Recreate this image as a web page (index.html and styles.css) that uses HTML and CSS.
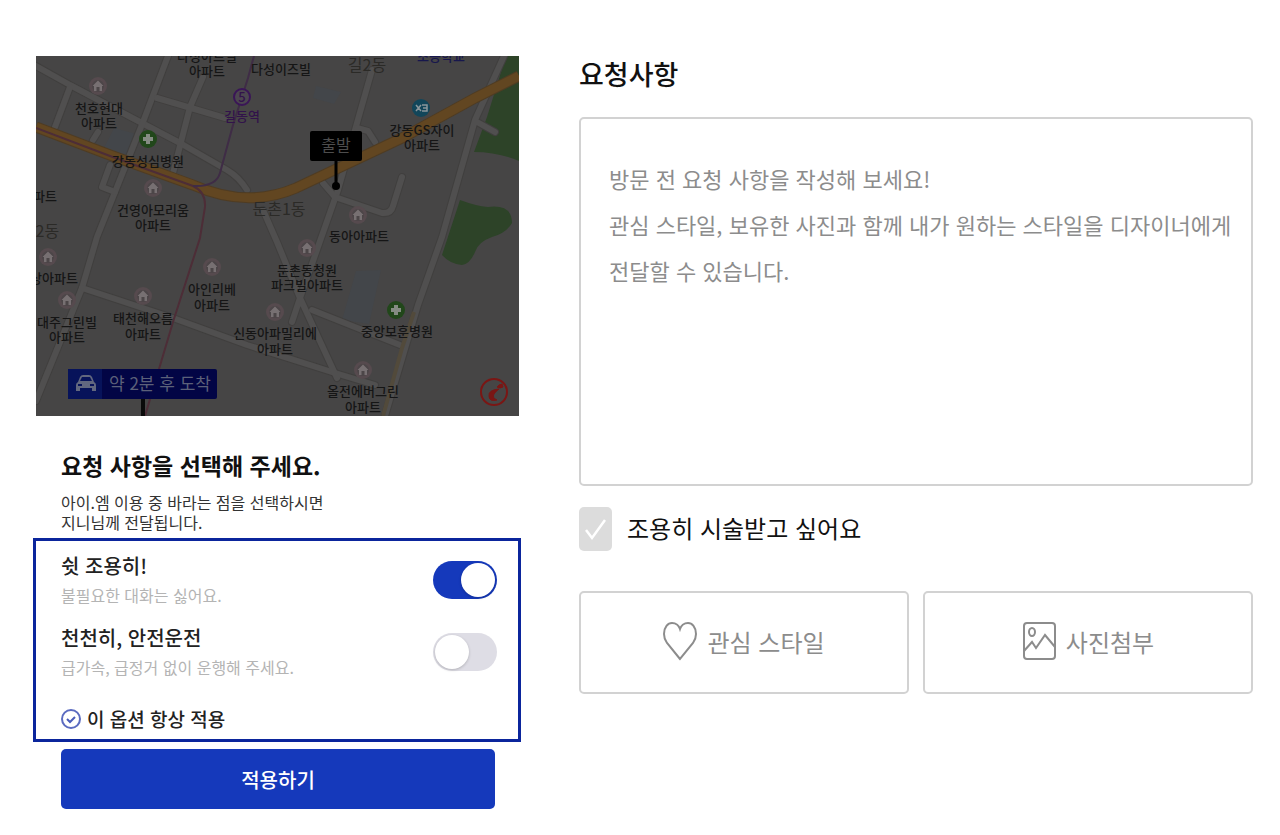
FILE: index.html
```html
<!DOCTYPE html>
<html lang="ko">
<head>
  <meta charset="UTF-8" />
  <meta name="viewport" content="width=device-width, initial-scale=1" />
  <title>요청사항</title>
  <link rel="stylesheet" href="styles.css">
</head>
<body>

<main class="page">

  <section class="ride">
    <svg class="map" viewBox="0 0 483 360" role="img" aria-label="지도">
      <defs>
        <g id="home">
          <circle r="9" fill="#564a4e" />
          <circle r="6" fill="#4c4648" />
          <path d="M-5.500 0L0-5.500L5.500 0H4V5H1.500V1H-1.500V5H-4V0Z" fill="#8a8284" opacity=".7" />
        </g>
        <g id="hospital">
          <circle r="9" fill="#21471a" />
          <path d="M-5 0H5M0-5V5" stroke="#858c83" stroke-width="4" />
        </g>
      </defs>

      <rect width="483" height="360" fill="#464545" />
      <path d="M320 215L345 214L333 268L306 264Z" fill="#43464a" />
      <path d="M78 72L100 78L88 104L66 96Z" fill="#43464a" />
      <path d="M280 30L305 36L298 48L277 42Z" fill="#43464a" />

      <!-- parks -->
      <g fill="#2d4328">
        <path d="M470 0H483V105Q462 96 438 96L451 61Z" />
        <path d="M424 144Q440 150 452 151Q476 148 476 167Q470 177 456 181Q442 186 439 196Q434 208 426 209Q414 208 406 199Z" />
      </g>

      <!-- roads -->
      <g class="road-edge">
        <path id="r1" d="M0 10L34 29L104 66L144 87L191 114Q203 121 211 134" />
        <path id="r2" d="M34 31L19 71M62 76L57 84M132 0L107 66L61 181L46 232L0 345" />
        <path id="r3" d="M121 42L189 62M167 21L154 51L137 117M74 109L66 131L79 136" />
        <path id="r4" d="M46 232L137 262L211 289L299 317L339 329" />
        <path id="r5" d="M227 154L241 186L264 242L301 322M256 266L264 242L302 134L336 14" />
        <path id="r6" d="M321 72L332 75L339 86M287 127L299 141L346 157Q355 158 357 150L366 121" />
        <path id="r7" d="M468 0L439 64L406 181L382 249L349 360M441 66L459 76M276 254L364 289" />
      </g>
      <g class="road">
        <use href="#r1" /><use href="#r2" /><use href="#r3" /><use href="#r4" />
        <use href="#r5" /><use href="#r6" /><use href="#r7" />
      </g>
      <path d="M378 256L366 292L347 360" fill="none" stroke="#524a3b" stroke-width="4" />

      <path class="highway-edge" d="M0 71L74 99L157 129Q211 153 260 132L366 82L439 42L483 20" />
      <path class="highway" d="M0 71L74 99L157 129Q211 153 260 132L366 82L439 42L483 20" />

      <!-- subway -->
      <path class="subway-red" d="M0 72L74 100L157 130M157 130Q170 136 169 151L164 182L137 266L109 360" />
      <path class="subway" d="M157 130Q180 131 184 117L197 69L212 22L218 0" />

      <use href="#home" x="62" y="30" />
      <use href="#home" x="117" y="132" />
      <use href="#home" x="322" y="159" />
      <use href="#home" x="271" y="192" />
      <use href="#home" x="176" y="211" />
      <use href="#home" x="107" y="240" />
      <use href="#home" x="31" y="244" />
      <use href="#home" x="12" y="201" />
      <use href="#home" x="239" y="256" />
      <use href="#home" x="327" y="314" />
      <use href="#hospital" x="112" y="83" />
      <use href="#hospital" x="360" y="254" />

      <circle cx="206" cy="41" r="8" fill="#4c464f" stroke="#3a1557" stroke-width="2" />
      <text class="place station" x="206" y="46">5</text>
      <circle cx="385" cy="52" r="9" fill="#12465a" />
      <path d="M380 49L385 55M380 55L385 49M386 49H391V55H386M387 52H391" fill="none" stroke="#8b979c" stroke-width="1.500" />

      <g class="place">
        <text x="171" y="5">다성아트빌</text>
        <text x="171" y="20">아파트</text>
        <text x="245" y="18">다성이즈빌</text>
        <text x="405" y="5" class="school">초등학교</text>
        <text x="63" y="57">천호현대</text>
        <text x="63" y="72">아파트</text>
        <text x="206" y="65" class="station">길동역</text>
        <text x="112" y="110">강동성심병원</text>
        <text x="117" y="159">건영아모리움</text>
        <text x="117" y="174">아파트</text>
        <text x="3" y="145">아파트</text>
        <text x="386" y="79">강동GS자이</text>
        <text x="386" y="94">아파트</text>
        <text x="323" y="185">동아아파트</text>
        <text x="271" y="219">둔촌동청원</text>
        <text x="271" y="234">파크빌아파트</text>
        <text x="176" y="238">아인리베</text>
        <text x="176" y="254">아파트</text>
        <text x="18" y="227">상아파트</text>
        <text x="31" y="271">대주그린빌</text>
        <text x="31" y="286">아파트</text>
        <text x="107" y="267">태천해오름</text>
        <text x="107" y="283">아파트</text>
        <text x="239" y="282">신동아파밀리에</text>
        <text x="239" y="298">아파트</text>
        <text x="361" y="280">중앙보훈병원</text>
        <text x="327" y="340">올전에버그린</text>
        <text x="327" y="356">아파트</text>
      </g>
      <g class="district">
        <text x="331" y="15">길2동</text>
        <text x="243" y="159">둔촌1동</text>
        <text x="4" y="181">촌2동</text>
      </g>

      <!-- departure pin -->
      <path d="M300 104V130" stroke="#000" stroke-width="3" />
      <circle cx="300" cy="130" r="4" />
      <rect x="274" y="75" width="52" height="30" rx="2" />
      <text class="pin-text" x="300" y="95">출발</text>

      <!-- arrival pin -->
      <path d="M107 342V360" stroke="#0a0a0a" stroke-width="4" />
      <rect x="32" y="313" width="149" height="30" rx="2" fill="#020545" />
      <path d="M32 313H66V343H32Z" fill="#07135a" />
      <path d="M42 326L44 321Q45 319 47 319H53Q55 319 56 321L58 326Q60 327 60 329V335H56V332H44V335H40V329Q40 327 42 326ZM44 325H56L54 321H46Z" fill="#62687f" fill-rule="evenodd" />
      <path d="M42 329H46M54 329H58" stroke="#07135a" stroke-width="2" />
      <text class="eta-text" x="124" y="334">약 2분 후 도착</text>

      <circle cx="458" cy="336" r="13" fill="none" stroke="#7a1614" stroke-width="2" />
      <path d="M461 331Q464 333 467 331L466 328L463 329ZM463 333Q452 334 453 340Q453 346 461 344Q456 342 458 338Q460 335 463 333Z" fill="#7a1614" stroke="#7a1614" />
    </svg>

    <div class="sheet-head">
      <h2>요청 사항을 선택해 주세요.</h2>
      <p>아이.엠 이용 중 바라는 점을 선택하시면<br>지니님께 전달됩니다.</p>
    </div>

    <div class="options">
      <div class="option">
        <label for="quiet">
          <strong>쉿 조용히!</strong>
          <span>불필요한 대화는 싫어요.</span>
        </label>
        <input id="quiet" class="switch" type="checkbox" role="switch" checked />
      </div>
      <div class="option">
        <label for="slow">
          <strong>천천히, 안전운전</strong>
          <span>급가속, 급정거 없이 운행해 주세요.</span>
        </label>
        <input id="slow" class="switch" type="checkbox" role="switch" />
      </div>
      <div class="always">
        <span class="tick round">
          <input id="always" type="checkbox" checked />
          <svg viewBox="0 0 20 20" aria-hidden="true"><path d="M6 10L9 13L14 8" /></svg>
        </span>
        <label for="always">이 옵션 항상 적용</label>
      </div>
    </div>

    <button class="apply" type="button">적용하기</button>
  </section>

  <section class="request">
    <h1><label for="memo">요청사항</label></h1>
    <textarea id="memo" placeholder="방문 전 요청 사항을 작성해 보세요!&#10;관심 스타일, 보유한 사진과 함께 내가 원하는 스타일을 디자이너에게 전달할 수 있습니다."></textarea>

    <div class="silent">
      <span class="tick">
        <input id="silent" type="checkbox" checked />
        <svg viewBox="0 0 33 44" aria-hidden="true"><path d="M7 23L13 31L26 13" /></svg>
      </span>
      <label for="silent">조용히 시술받고 싶어요</label>
    </div>

    <div class="attach">
      <button type="button">
        <svg width="34" height="40" viewBox="0 0 34 40" aria-hidden="true">
          <path d="M17 38L4 22Q1 18 1 13C1 6 5 2 9 2C13 2 16 5 17 8C18 5 21 2 25 2C29 2 33 6 33 13Q33 18 30 22Z" />
        </svg>
        관심 스타일
      </button>
      <button type="button">
        <svg width="34" height="40" viewBox="0 0 34 40" aria-hidden="true">
          <rect x="2" y="2" width="31" height="36" rx="3" />
          <ellipse cx="10" cy="11" rx="3" ry="4" />
          <path d="M2 30L10 21L14 27L23 14L33 26" />
        </svg>
        사진첨부
      </button>
    </div>
  </section>

</main>

</body>
</html>
```
FILE: styles.css
```css
* {
  box-sizing: border-box;
}

body {
  margin: 0;
  background: #fff;
  color: #111;
  font-family: "Noto Sans CJK KR", sans-serif;
}

h1, h2, p {
  margin: 0;
}

button, textarea {
  font-family: inherit;
}

.page {
  display: grid;
  grid-template-columns: 488fr 674fr;
  gap: 58px;
  align-items: start;
  padding: 56px 27px 24px 33px;
}

/* Left: map and option sheet */
.ride {
  display: flex;
  flex-direction: column;
}

.map {
  display: block;
  margin: 0 2px 0 3px;
}

.road, .road-edge {
  fill: none;
  stroke-linejoin: round;
  stroke-linecap: round;
}

.road-edge {
  stroke: #403f3e;
  stroke-width: 8;
}

.road {
  stroke: #504f4f;
  stroke-width: 6;
}

.highway, .highway-edge {
  fill: none;
  stroke: #624621;
  stroke-width: 9;
}

.highway-edge {
  stroke: #4f3c23;
  stroke-width: 11;
}

.subway, .subway-red {
  fill: none;
  stroke: #3f2c46;
  stroke-width: 2;
}

.subway-red {
  stroke: #4d2d37;
}

.place {
  font-size: 13px;
  font-weight: 500;
  fill: #151515;
  text-anchor: middle;
}

.station {
  fill: #32124b;
}

.school {
  fill: #17174d;
}

.district {
  font-size: 16px;
  fill: #2b2a27;
  text-anchor: middle;
}

.pin-text {
  font-size: 16px;
  fill: #4d4d4d;
  text-anchor: middle;
}

.eta-text {
  font-size: 17px;
  fill: #5c6079;
  text-anchor: middle;
}

.sheet-head {
  padding: 33px 28px 6px;
}

.sheet-head h2 {
  font-size: 23px;
  line-height: 32px;
  font-weight: 700;
  margin-bottom: 11px;
}

.sheet-head p {
  font-size: 16px;
  line-height: 20px;
  color: #333;
}

.options {
  border: 3px solid #0b259c;
  padding: 10px 21px 6px 25px;
}

.option {
  display: flex;
  justify-content: space-between;
  align-items: center;
  margin-bottom: 14px;
}

.option strong, .option span {
  display: block;
}

.option strong {
  font-size: 20px;
  line-height: 30px;
  font-weight: 500;
  color: #222;
}

.option span {
  font-size: 16px;
  line-height: 28px;
  color: #b4b4b4;
}

.switch {
  appearance: none;
  flex: none;
  width: 64px;
  height: 38px;
  margin: 0;
  padding: 2px;
  border-radius: 19px;
  background: #dedde5;
  cursor: pointer;
}

.switch::before {
  content: "";
  display: block;
  width: 34px;
  height: 34px;
  border-radius: 50%;
  background: #fff;
  box-shadow: 0 1px 3px rgba(0,0,0,0.2);
}

.switch:checked {
  background: #1539bb;
}

.switch:checked::before {
  margin-left: auto;
}

.always {
  display: flex;
  align-items: center;
  gap: 6px;
  margin-top: 24px;
  font-size: 19px;
  line-height: 28px;
  font-weight: 500;
  color: #222;
}

/* Tick boxes: the mark lies in the same grid cell as the input */
.tick {
  display: grid;
  flex: none;
  width: 33px;
  height: 44px;
}

.tick input, .tick svg {
  grid-area: 1 / 1;
  width: 100%;
  height: 100%;
  margin: 0;
}

.tick input {
  appearance: none;
  border-radius: 5px;
  background: #dcdcdc;
}

.tick svg {
  fill: none;
  stroke: #fff;
  stroke-width: 2.500;
  pointer-events: none;
}

.tick input:not(:checked) + svg {
  visibility: hidden;
}

.tick.round {
  width: 20px;
  height: 20px;
}

.tick.round input {
  border: 2px solid #5b6bc0;
  border-radius: 50%;
  background: #fff;
}

.tick.round svg {
  stroke: #4a5cba;
  stroke-width: 2;
}

.apply {
  height: 60px;
  margin: 7px 26px 0 28px;
  border: none;
  border-radius: 5px;
  background: #1539bb;
  color: #fff;
  font-size: 20px;
  font-weight: 500;
  cursor: pointer;
}

/* Right: request form */
.request h1 {
  font-size: 27px;
  line-height: 36px;
  font-weight: 500;
  margin-bottom: 25px;
}

.request textarea {
  display: block;
  width: 100%;
  height: 369px;
  padding: 36px 16px 36px 28px;
  border: 2px solid #d2d2d2;
  border-radius: 5px;
  resize: none;
  font-size: 22px;
  line-height: 46px;
  word-break: keep-all;
  color: #111;
}

.request textarea::placeholder {
  color: #8c8c8c;
}

.silent {
  display: flex;
  align-items: center;
  gap: 15px;
  margin: 21px 0 40px;
  font-size: 24px;
}

.silent label {
  padding-bottom: 4px;
}

.attach {
  display: grid;
  grid-template-columns: 1fr 1fr;
  gap: 14px;
}

.attach button {
  display: flex;
  justify-content: center;
  align-items: center;
  gap: 10px;
  height: 103px;
  padding: 0 0 3px;
  border: 2px solid #d2d2d2;
  border-radius: 5px;
  background: #fff;
  color: #8c8c8c;
  font-size: 24px;
  cursor: pointer;
}

.attach svg {
  fill: none;
  stroke: #8c8c8c;
  stroke-width: 2;
}
```
